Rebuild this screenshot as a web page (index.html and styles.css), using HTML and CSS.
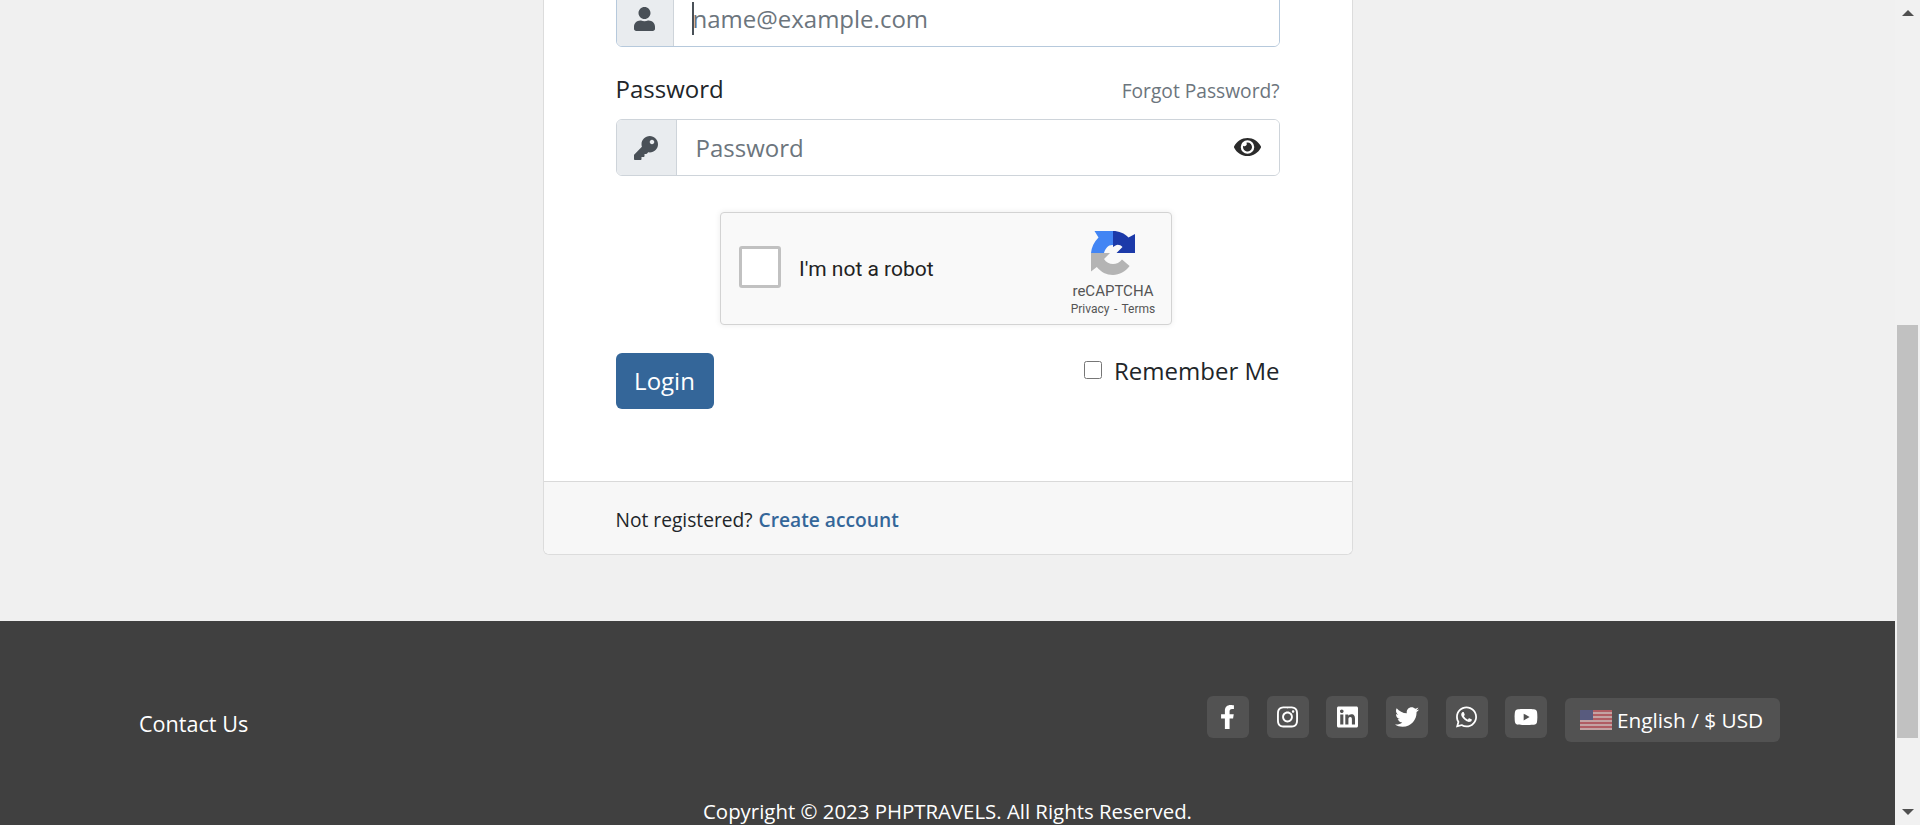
FILE: index.html
```html
<!DOCTYPE html>
<html lang="en">
<head>
<meta charset="utf-8">
<title>Login</title>
<link rel="stylesheet" href="styles.css">
</head>
<body>
<div class="viewport">
  <div class="page">
    <main class="main">
      <section class="card">
        <form class="card-body">
          <div class="input-group focused">
            <span class="addon addon-email"><svg class="ico-user" viewBox="0 0 448 512"><path d="M224 256c70.7 0 128-57.3 128-128S294.7 0 224 0 96 57.3 96 128s57.3 128 128 128zm89.6 32h-16.7c-22.2 10.2-46.9 16-72.9 16s-50.6-5.8-72.9-16h-16.7C60.2 288 0 348.2 0 422.4V464c0 26.5 21.5 48 48 48h352c26.5 0 48-21.5 48-48v-41.6c0-74.2-60.2-134.4-134.4-134.4z"/></svg></span>
            <div class="field">
              <input class="control" type="text" placeholder="name@example.com">
              <span class="caret"></span>
            </div>
          </div>
          <div class="label-row">
            <label class="label">Password</label>
            <a class="forgot">Forgot Password?</a>
          </div>
          <div class="input-group">
            <span class="addon addon-pass"><svg class="ico-key" viewBox="0 0 512 512"><path d="M512 176.001C512 273.203 433.202 352 336 352c-11.22 0-22.19-1.062-32.827-3.069l-24.012 27.014A23.999 23.999 0 0 1 261.223 384H224v40c0 13.255-10.745 24-24 24h-40v40c0 13.255-10.745 24-24 24H24c-13.255 0-24-10.745-24-24v-78.059c0-6.365 2.529-12.47 7.029-16.971l161.802-161.802C163.108 213.814 160 195.271 160 176 160 78.798 238.797.001 335.999 0 433.488-.001 512 78.511 512 176.001zM336 128c0 26.51 21.49 48 48 48s48-21.49 48-48-21.49-48-48-48-48 21.49-48 48z"/></svg></span>
            <div class="field">
              <input class="control" type="password" placeholder="Password">
              <svg class="ico-eye" viewBox="0 0 576 512"><path d="M572.52 241.4C518.29 135.59 410.93 64 288 64S57.68 135.64 3.48 241.41a32.35 32.35 0 0 0 0 29.19C57.71 376.41 165.07 448 288 448s230.32-71.64 284.52-177.41a32.35 32.35 0 0 0 0-29.19zM288 400a144 144 0 1 1 144-144 143.93 143.93 0 0 1-144 144zm0-240a95.31 95.31 0 0 0-25.31 3.79 47.85 47.85 0 0 1-66.9 66.9A95.78 95.78 0 1 0 288 160z"/></svg>
            </div>
          </div>
          <div class="captcha-row">
            <div class="captcha">
              <span class="captcha-box"></span>
              <span class="captcha-text">I'm not a robot</span>
              <div class="captcha-brand">
                <svg class="captcha-logo" viewBox="0 0 44 44">
                  <path fill="#1c3aa9" d="M22 0C28 0 33.5 2.4 37.5 6.4L44 3V22H25.5L31.5 16C29.5 14 26.5 13 24.5 14.5L22 16Z"/>
                  <path fill="#4285f4" d="M8 0H22V14C17.5 13.5 14.5 17 13 22H0C0.5 16 3 11 7.5 6.5L3.5 0Z"/>
                  <path fill="#b4b4b4" d="M0 22H19L13 28C15 31.5 18.5 33 22 33C25.5 33 28.5 31.5 31 28.5L38.6 35C34.5 40.5 28.5 44 22 44C15.5 44 9.8 41 5.8 36L0 40.5Z"/>
                </svg>
                <span class="captcha-name">reCAPTCHA</span>
                <span class="captcha-links">Privacy - Terms</span>
              </div>
            </div>
          </div>
          <div class="action-row">
            <button class="login" type="button">Login</button>
            <label class="remember"><input class="check" type="checkbox"><span>Remember Me</span></label>
          </div>
        </form>
        <div class="card-foot">
          <span>Not registered?</span> <a class="create">Create account</a>
        </div>
      </section>
    </main>
    <footer class="footer">
      <div class="footer-row">
        <a class="contact">Contact Us</a>
        <div class="footer-tools">
          <a class="social"><svg class="ico-fb" viewBox="0 0 320 512"><path d="M279.14 288l14.22-92.66h-88.91v-60.13c0-25.35 12.42-50.06 52.24-50.06h40.42V6.26S260.43 0 225.36 0c-73.22 0-121.08 44.38-121.08 124.72v70.62H22.89V288h81.39v224h100.17V288z"/></svg></a>
          <a class="social"><svg class="ico-s" viewBox="0 0 448 512"><path d="M224.1 141c-63.6 0-114.9 51.3-114.9 114.9s51.3 114.9 114.9 114.9S339 319.5 339 255.9 287.7 141 224.1 141zm0 189.6c-41.1 0-74.7-33.5-74.7-74.7s33.5-74.7 74.7-74.7 74.7 33.5 74.7 74.7-33.6 74.7-74.7 74.7zm146.4-194.3c0 14.9-12 26.8-26.8 26.8-14.9 0-26.8-12-26.8-26.8s12-26.8 26.8-26.8 26.8 12 26.8 26.8zm76.1 27.2c-1.7-35.9-9.9-67.7-36.2-93.9-26.2-26.2-58-34.4-93.9-36.2-37-2.1-147.9-2.1-184.9 0-35.8 1.7-67.6 9.9-93.9 36.1s-34.4 58-36.2 93.9c-2.1 37-2.1 147.9 0 184.9 1.7 35.9 9.9 67.7 36.2 93.9s58 34.4 93.9 36.2c37 2.1 147.9 2.1 184.9 0 35.9-1.7 67.7-9.9 93.9-36.2 26.2-26.2 34.4-58 36.2-93.9 2.1-37 2.1-147.8 0-184.8zM398.8 388c-7.8 19.6-22.9 34.7-42.6 42.6-29.5 11.7-99.5 9-132.1 9s-102.7 2.6-132.1-9c-19.6-7.8-34.7-22.9-42.6-42.6-11.7-29.5-9-99.5-9-132.1s-2.6-102.7 9-132.1c7.8-19.6 22.9-34.7 42.6-42.6 29.5-11.7 99.5-9 132.1-9s102.7-2.6 132.1 9c19.6 7.8 34.7 22.9 42.6 42.6 11.7 29.5 9 99.5 9 132.1s2.7 102.7-9 132.1z"/></svg></a>
          <a class="social"><svg class="ico-s" viewBox="0 0 448 512"><path d="M416 32H31.9C14.3 32 0 46.5 0 64.3v383.4C0 465.5 14.3 480 31.9 480H416c17.6 0 32-14.5 32-32.3V64.3c0-17.8-14.4-32.3-32-32.3zM135.4 416H69V202.2h66.5V416zm-33.2-243c-21.3 0-38.5-17.3-38.5-38.5S80.9 96 102.2 96c21.2 0 38.5 17.3 38.5 38.5 0 21.3-17.2 38.5-38.5 38.5zm282.1 243h-66.4V312c0-24.8-.5-56.7-34.5-56.7-34.6 0-39.9 27-39.9 54.9V416h-66.4V202.2h63.7v29.2h.9c8.9-16.8 30.6-34.5 62.9-34.5 67.2 0 79.7 44.3 79.7 101.9V416z"/></svg></a>
          <a class="social"><svg class="ico-w" viewBox="0 0 512 512"><path d="M459.37 151.716c.325 4.548.325 9.097.325 13.645 0 138.72-105.583 298.558-298.558 298.558-59.452 0-114.68-17.219-161.137-47.106 8.447.974 16.568 1.299 25.34 1.299 49.055 0 94.213-16.568 130.274-44.832-46.132-.975-84.792-31.188-98.112-72.772 6.498.974 12.995 1.624 19.818 1.624 9.421 0 18.843-1.3 27.614-3.573-48.081-9.747-84.143-51.98-84.143-102.985v-1.299c13.969 7.797 30.214 12.67 47.431 13.319-28.264-18.843-46.781-51.005-46.781-87.391 0-19.492 5.197-37.36 14.294-52.954 51.655 63.675 129.3 105.258 216.365 109.807-1.624-7.797-2.599-15.918-2.599-24.04 0-57.828 46.782-104.934 104.934-104.934 30.213 0 57.502 12.67 76.67 33.137 23.715-4.548 46.456-13.32 66.599-25.34-7.798 24.366-24.366 44.833-46.132 57.827 21.117-2.273 41.584-8.122 60.426-16.243-14.292 20.791-32.161 39.308-52.628 54.253z"/></svg></a>
          <a class="social"><svg class="ico-s" viewBox="0 0 448 512"><path d="M380.9 97.1C339 55.1 283.2 32 223.9 32c-122.4 0-222 99.6-222 222 0 39.1 10.2 77.3 29.6 111L0 480l117.7-30.9c32.4 17.7 68.9 27 106.1 27h.1c122.3 0 224.1-99.6 224.1-222 0-59.3-25.2-115-67.1-157zm-157 341.6c-33.2 0-65.7-8.9-94-25.7l-6.7-4-69.8 18.3L72 359.2l-4.4-7c-18.5-29.4-28.2-63.3-28.2-98.2 0-101.7 82.8-184.5 184.6-184.5 49.3 0 95.6 19.2 130.4 54.1 34.8 34.9 56.2 81.2 56.1 130.5 0 101.8-84.9 184.6-186.6 184.6zm101.2-138.2c-5.5-2.8-32.8-16.2-37.9-18-5.1-1.9-8.8-2.8-12.5 2.8-3.7 5.6-14.3 18-17.6 21.8-3.2 3.7-6.5 4.2-12 1.4-32.6-16.3-54-29.1-75.5-66-5.7-9.8 5.7-9.1 16.3-30.3 1.8-3.7.9-6.9-.5-9.7-1.4-2.8-12.5-30.1-17.1-41.2-4.5-10.8-9.1-9.3-12.5-9.5-3.2-.2-6.9-.2-10.6-.2-3.7 0-9.7 1.4-14.8 6.9-5.1 5.6-19.4 19-19.4 46.3 0 27.3 19.9 53.7 22.6 57.4 2.8 3.7 39.1 59.7 94.8 83.8 35.2 15.2 49 16.5 66.6 13.9 10.7-1.6 32.8-13.4 37.4-26.4 4.6-13 4.6-24.1 3.2-26.4-1.3-2.5-5-3.9-10.5-6.6z"/></svg></a>
          <a class="social"><svg class="ico-y" viewBox="0 0 576 512"><path d="M549.655 124.083c-6.281-23.65-24.787-42.276-48.284-48.597C458.781 64 288 64 288 64S117.22 64 74.629 75.486c-23.497 6.322-42.003 24.947-48.284 48.597-11.412 42.867-11.412 132.305-11.412 132.305s0 89.438 11.412 132.305c6.281 23.65 24.787 41.5 48.284 47.821C117.22 448 288 448 288 448s170.78 0 213.371-11.486c23.497-6.321 42.003-24.171 48.284-47.821 11.412-42.867 11.412-132.305 11.412-132.305s0-89.438-11.412-132.305zm-317.51 213.508V175.185l142.739 81.205-142.739 81.201z"/></svg></a>
          <a class="lang">
            <svg class="flag" viewBox="0 0 32 20">
              <rect width="32" height="20" fill="#f3c6c6"/>
              <g fill="#d8636b">
                <rect y="0" width="32" height="2"/><rect y="4" width="32" height="2"/><rect y="8" width="32" height="2"/><rect y="12" width="32" height="2"/><rect y="16" width="32" height="2"/>
              </g>
              <rect width="13" height="10" fill="#5b5f91"/>
            </svg>
            <span>English / $ USD</span>
          </a>
        </div>
      </div>
      <p class="copyright">Copyright © 2023 PHPTRAVELS. All Rights Reserved.</p>
    </footer>
  </div>
  <aside class="scrollbar">
    <span class="arrow arrow-up"></span>
    <div class="track"><span class="thumb"></span></div>
    <span class="arrow arrow-down"></span>
  </aside>
</div>
</body>
</html>
```
FILE: styles.css
```css
* { box-sizing: border-box; }
html, body { margin: 0; height: 100%; overflow: hidden; }
body { font-family: "Open Sans", sans-serif; color: #212529; background: #f0f0f0; }

.viewport { display: flex; height: 825px; overflow: hidden; }
.page { flex: 1; min-width: 0; display: flex; flex-direction: column; }

.main { display: flex; justify-content: center; height: 621px; flex: none; }
.card { width: 810px; height: 555px; background: #fff; border: 1px solid #dcdcdc; border-top: 0; border-radius: 0 0 6px 6px; display: flex; flex-direction: column; }
.card-body { flex: 1; padding: 0 72px; display: flex; flex-direction: column; }

.input-group { display: flex; height: 57px; flex: none; border-radius: 6px; border: 1px solid #ced4da; background: #fff; overflow: hidden; }
.input-group.focused { margin-top: -10px; border-color: #b6c9dc; }
.addon { flex: none; display: flex; align-items: center; justify-content: center; background: #e9ecef; border-right: 1px solid #ced4da; color: #495057; }
.addon-email { width: 57px; }
.addon-pass { width: 60px; }
.ico-user { width: 21px; height: 24px; fill: #495057; }
.ico-key { width: 24px; height: 24px; fill: #495057; }
.field { flex: 1; position: relative; min-width: 0; }
.control { width: 100%; height: 100%; border: 0; outline: 0; padding: 0 19px; font: 24px "Open Sans", sans-serif; color: #495057; background: #fff; }
.control::placeholder { color: #6c757d; opacity: 1; }
.caret { position: absolute; left: 18px; top: 11px; width: 2px; height: 33px; background: #495057; }
.ico-eye { position: absolute; right: 18px; top: 15px; width: 27px; height: 24px; fill: #2b2b2b; }

.label-row { display: flex; justify-content: space-between; align-items: center; height: 72px; flex: none; padding-top: 12px; }
.label { font-size: 24px; line-height: 36px; color: #212529; }
.forgot { font-size: 19.2px; line-height: 30px; color: #6c757d; padding-top: 3px; }

.captcha-row { display: flex; justify-content: center; margin-top: 36px; padding-right: 3px; flex: none; }
.captcha { width: 452px; height: 113px; background: #f9f9f9; border: 1.5px solid #d3d3d3; border-radius: 4px; box-shadow: 0 0 6px rgba(0,0,0,.08); display: flex; align-items: center; padding-left: 18px; }
.captcha-box { width: 42px; height: 42px; margin-top: -4px; border: 3px solid #c1c1c1; border-radius: 3px; background: #fff; flex: none; }
.captcha-text { margin-left: 18px; font: 21px Roboto, sans-serif; color: #222; flex: 1; }
.captcha-brand { width: 100px; margin-right: 8px; display: flex; flex-direction: column; align-items: center; padding-top: 12px; }
.captcha-logo { width: 44px; height: 44px; display: block; }
.captcha-name { font: 15px/18px Roboto, sans-serif; color: #555; margin-top: 7px; }
.captcha-links { font: 12px/18px Roboto, sans-serif; color: #555; word-spacing: 1.5px; }

.action-row { display: flex; justify-content: space-between; align-items: flex-start; margin-top: 28px; flex: none; }
.login { width: 98px; height: 56px; border: 0; border-radius: 6px; background: #346699; color: #fff; font: 24px/50px "Open Sans", sans-serif; padding: 0 0 1px; }
.remember { display: flex; align-items: center; font-size: 24px; line-height: 36px; gap: 12px; color: #212529; }
.check { margin: 0 0 2px; width: 18px; height: 18px; }

.card-foot { flex: none; height: 73px; padding: 2px 72px 0; background: #f7f7f7; border-top: 1px solid #d9d9d9; border-radius: 0 0 6px 6px; display: flex; align-items: center; gap: 6px; font-size: 19.2px; color: #212529; }
.create { color: #346699; font-weight: 600; }

.footer { flex: 1; background: #404040; color: #fff; min-height: 0; }
.footer-row { display: flex; justify-content: space-between; align-items: flex-start; padding: 75px 115px 0 139px; }
.contact { font-size: 21.6px; line-height: 32px; margin-top: 12px; }
.footer-tools { display: flex; align-items: flex-start; gap: 17.7px; }
.social { width: 42px; height: 42px; border-radius: 6px; background: #525252; display: flex; align-items: center; justify-content: center; flex: none; }
.social svg { fill: #fff; display: block; }
.ico-fb { width: 15px; height: 24px; }
.ico-s { width: 21px; height: 24px; }
.ico-w { width: 24px; height: 24px; }
.ico-y { width: 24px; height: 22px; }
.lang { display: flex; align-items: center; gap: 5px; width: 215px; height: 44px; margin-top: 2px; padding-left: 15px; border-radius: 6px; background: #525252; font-size: 20.8px; white-space: nowrap; }
.flag { width: 32px; height: 20px; flex: none; display: block; opacity: .7; }
.copyright { margin: 0; padding-top: 55px; text-align: center; font-size: 20.4px; line-height: 28px; white-space: nowrap; }

.scrollbar { flex: none; width: 25px; background: #f1f1f1; display: flex; flex-direction: column; align-items: center; }
.arrow { flex: none; width: 0; height: 0; border-left: 6px solid transparent; border-right: 6px solid transparent; }
.arrow-up { margin: 10px 0 9px; border-bottom: 6px solid #505050; }
.arrow-down { margin: 9px 0 10px; border-top: 6px solid #505050; }
.track { flex: 1; width: 100%; min-height: 0; padding: 300px 2px 0; }
.thumb { display: block; width: 21px; height: 413px; background: #c1c1c1; }
```
